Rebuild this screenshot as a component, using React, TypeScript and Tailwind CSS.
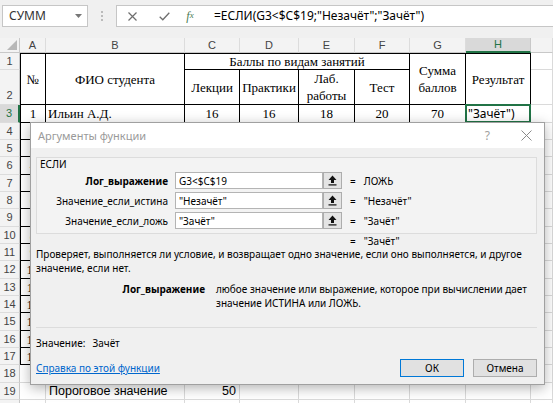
import React from 'react';

const rowHead =
	"flex items-center justify-center bg-[#f3f3f3] border-r border-b border-r-[#c8c8c8] border-b-[#dcdcdc] text-[11px] text-[#444]";
const colHead =
	"flex items-center justify-center bg-[#f3f3f3] border-r border-b border-r-[#dcdcdc] border-b-[#c8c8c8] text-[11px] text-[#444]";
const grid = "border-r border-b border-[#dadada]";
const box = "border-r border-b border-black";
const serif = "font-['Liberation_Serif','Times_New_Roman',serif] text-[13px] leading-[15px] text-black";
const center = "flex items-center justify-center text-center";

const letters = ['A', 'B', 'C', 'D', 'E', 'F', 'G'];

function UploadIcon()
{
	return (
		<svg width="9" height="11" viewBox="0 0 9 11">
			<path d="M4.5 0.5 L8.5 5 H6 V8 H3 V5 H0.5 Z" fill="#111" />
			<rect x="0.5" y="9.3" width="8" height="1.2" fill="#111" />
		</svg>
	);
}

function ArgRow({ label, value, result, bold }: { label: string; value: string; result: string; bold?: boolean })
{
	return (
		<div className="flex items-center h-[17px]">
			<div className={`w-[131px] text-right whitespace-nowrap ${bold ? 'font-bold' : ''}`}>{label}</div>
			<div className="ml-[7px] w-[148px] h-[17px] bg-white border border-[#b4b4b4] flex items-center pl-[3px] whitespace-nowrap">
				{value}
			</div>
			<div className="w-[19px] h-[17px] bg-[#e4e4e4] border border-[#adadad] flex items-center justify-center">
				<UploadIcon />
			</div>
			<span className="ml-[8px]">=</span>
			<span className="ml-[8px] whitespace-nowrap">{result}</span>
		</div>
	);
}

function Sheet()
{
	const bodyRows = Array.from({ length: 14 }, (_, i) => i + 4);

	return (
		<div className="grid grid-cols-[20px_26px_139px_55px_59px_56px_55px_56px_65px_1fr] grid-rows-[15px_17px_35px_18px_17px_17px_18px_17px_17px_18px_17px_17px_18px_17px_17px_18px_17px_17px_18px_17px_17px] bg-white font-['Liberation_Sans',Arial,sans-serif]">
			{/* column headers */}
			<div className="relative bg-[#f3f3f3] border-r border-b border-r-[#c8c8c8] border-b-[#c8c8c8]">
				<svg className="absolute left-0 top-0" width="20" height="15" viewBox="0 0 20 15">
					<path d="M7 12 L17 2 L17 12 Z" fill="#b8b8b8" />
				</svg>
			</div>
			{letters.map((l) => (
				<div key={l} className={colHead}>{l}</div>
			))}
			<div className="flex items-center justify-center bg-[#d9d9d9] border-r border-r-[#c8c8c8] border-b-2 border-b-[#217346] text-[11px] text-[#217346]">
				H
			</div>
			<div className={colHead} />

			{/* row 1 */}
			<div className={rowHead}>1</div>
			<div className={`row-span-2 ${box} border-t border-l ${serif} ${center}`}>№</div>
			<div className={`row-span-2 ${box} border-t ${serif} ${center}`}>ФИО студента</div>
			<div className={`col-span-4 ${box} border-t ${serif} ${center}`}>Баллы по видам занятий</div>
			<div className={`row-span-2 ${box} border-t ${serif} ${center} flex-col`}>
				<span>Сумма</span>
				<span className="mt-[2px]">баллов</span>
			</div>
			<div className={`row-span-2 ${box} border-t ${serif} ${center}`}>Результат</div>
			<div className={grid} />

			{/* row 2 */}
			<div className={`${rowHead} items-end pb-[1px]`}>2</div>
			<div className={`${box} ${serif} ${center}`}>Лекции</div>
			<div className={`${box} ${serif} ${center}`}>Практики</div>
			<div className={`${box} ${serif} ${center} flex-col`}>
				<span>Лаб.</span>
				<span className="mt-[2px]">работы</span>
			</div>
			<div className={`${box} ${serif} ${center}`}>Тест</div>
			<div className={grid} />

			{/* row 3 */}
			<div className="flex items-center justify-center bg-[#d9d9d9] border-b border-b-[#dcdcdc] border-r-2 border-r-[#217346] text-[11px] text-[#217346]">
				3
			</div>
			<div className={`${box} border-l ${serif} ${center}`}>1</div>
			<div className={`${box} ${serif} flex items-center pl-[2px]`}>Ильин А.Д.</div>
			<div className={`${box} ${serif} ${center}`}>16</div>
			<div className={`${box} ${serif} ${center}`}>16</div>
			<div className={`${box} ${serif} ${center}`}>18</div>
			<div className={`${box} ${serif} ${center}`}>20</div>
			<div className={`${box} ${serif} ${center}`}>70</div>
			<div className={`relative ${box} flex items-center pl-[2px] font-['Noto_Sans',sans-serif] text-[12px] whitespace-nowrap`}>
				"Зачёт")
				<div className="absolute -left-[1px] -top-[1px] -right-[1px] -bottom-[1px] border-2 border-[#217346]" />
			</div>
			<div className={grid} />

			{/* rows 4-17 */}
			{bodyRows.map((r) => (
				<React.Fragment key={r}>
					<div className={rowHead}>{r}</div>
					<div className={`${box} border-l ${serif} ${center}`}>{r - 2}</div>
					<div className={box} />
					<div className={box} />
					<div className={box} />
					<div className={box} />
					<div className={box} />
					<div className={box} />
					<div className={box} />
					<div className={grid} />
				</React.Fragment>
			))}

			{/* row 18 */}
			<div className={rowHead}>18</div>
			{Array.from({ length: 9 }, (_, i) => (
				<div key={i} className={grid} />
			))}

			{/* row 19 */}
			<div className={rowHead}>19</div>
			<div className={grid} />
			<div className={`${grid} flex items-center pl-[3px] text-[12.5px] whitespace-nowrap`}>Пороговое значение</div>
			<div className={`${grid} flex items-center justify-end pr-[3px] text-[12.5px]`}>50</div>
			{Array.from({ length: 6 }, (_, i) => (
				<div key={i} className={grid} />
			))}

			{/* row 20, only its top shows */}
			<div className={rowHead} />
			{Array.from({ length: 9 }, (_, i) => (
				<div key={i} className={grid} />
			))}
		</div>
	);
}

function FormulaBar()
{
	return (
		<div className="h-[38px] bg-[#f0f0f0] flex items-start pt-[5px] font-['Noto_Sans',sans-serif]">
			<div className="ml-[2px] w-[86px] h-[22px] bg-white border border-[#c6c6c6] flex items-center pl-[6px] text-[12px] text-[#333]">
				СУММ
				<svg className="ml-auto mr-[5px]" width="7" height="4" viewBox="0 0 7 4">
					<path d="M0 0 H7 L3.5 4 Z" fill="#777" />
				</svg>
			</div>
			<div className="w-[28px] h-[22px] flex flex-col items-center justify-center gap-[2px]">
				<span className="w-[2px] h-[2px] bg-[#bbb]" />
				<span className="w-[2px] h-[2px] bg-[#bbb]" />
				<span className="w-[2px] h-[2px] bg-[#bbb]" />
			</div>
			<div className="flex-1 h-[22px] bg-white border border-r-0 border-[#c6c6c6] flex items-center">
				<div className="w-[30px] flex justify-center">
					<svg width="9" height="9" viewBox="0 0 9 9">
						<path d="M0.5 0.5 L8.5 8.5 M8.5 0.5 L0.5 8.5" stroke="#6e6e6e" strokeWidth="1.2" />
					</svg>
				</div>
				<div className="w-[34px] flex justify-center">
					<svg width="11" height="9" viewBox="0 0 11 9">
						<path d="M0.7 4.8 L3.8 7.8 L10.3 0.8" stroke="#6e6e6e" strokeWidth="1.3" fill="none" />
					</svg>
				</div>
				<div className="w-[18px] flex justify-center font-['Liberation_Serif',serif] italic text-[12px] text-[#4b7a52]">
					f<span className="text-[9px] mt-[2px]">x</span>
				</div>
				<div className="ml-[15px] text-[12px] text-black whitespace-nowrap">=ЕСЛИ(G3&lt;$C$19;"Незачёт";"Зачёт")</div>
			</div>
		</div>
	);
}

function Dialog()
{
	return (
		<div className="absolute left-[30px] top-[122px] w-[515px] h-[263px] flex flex-col bg-[#f0f0f0] border border-[#a0a0a0] shadow-[0_3px_12px_rgba(0,0,0,0.3)] font-['Noto_Sans',sans-serif] text-[10px] leading-[14px] text-black">
			<div className="h-[25px] shrink-0 bg-white flex items-center pl-[7px]">
				<span className="text-[11px] text-[#9a9a9a]">Аргументы функции</span>
				<span className="ml-auto mr-[31px] text-[12px] text-[#a0a0a0]">?</span>
				<svg className="mr-[12px]" width="11" height="11" viewBox="0 0 11 11">
					<path d="M0.5 0.5 L10.5 10.5 M10.5 0.5 L0.5 10.5" stroke="#8a8a8a" strokeWidth="1" />
				</svg>
			</div>
			<div className="flex flex-col pl-[5px] pr-[7px] pt-[9px]">
				<div className="h-[77px] border border-[#dcdcdc] bg-[#f3f3f3] flex flex-col">
					<div className="h-[12px] leading-[12px] pl-[3px]">ЕСЛИ</div>
					<div className="mt-[2px] flex flex-col gap-[3px]">
						<ArgRow label="Лог_выражение" value="G3<$C$19" result="ЛОЖЬ" bold />
						<ArgRow label="Значение_если_истина" value={'"Незачёт"'} result={'"Незачёт"'} />
						<ArgRow label="Значение_если_ложь" value={'"Зачёт"'} result={'"Зачёт"'} />
					</div>
				</div>
				<div className="mt-[2px] h-[11px] leading-[11px] flex items-center pl-[314px]">
					<span>=</span>
					<span className="ml-[8px]">"Зачёт"</span>
				</div>
				<div className="whitespace-nowrap">
					Проверяет, выполняется ли условие, и возвращает одно значение, если оно выполняется, и другое
					<br />
					значение, если нет.
				</div>
				<div className="mt-[7px] flex">
					<div className="w-[169px] text-right font-bold">Лог_выражение</div>
					<div className="ml-[11px] whitespace-nowrap">
						любое значение или выражение, которое при вычислении дает
						<br />
						значение ИСТИНА или ЛОЖЬ.
					</div>
				</div>
				<div className="mt-[17px] border-t border-[#dcdcdc]" />
				<div className="mt-[8px] flex">
					<span>Значение:</span>
					<span className="ml-[7px]">Зачёт</span>
				</div>
				<div className="mt-[9px] h-[18px] flex items-center">
					<span className="text-[#0066cc] underline">Справка по этой функции</span>
					<div className="ml-auto w-[64px] h-[18px] bg-[#e1e1e1] border border-[#0078d7] flex items-center justify-center">
						ОК
					</div>
					<div className="ml-[9px] w-[64px] h-[18px] bg-[#e1e1e1] border border-[#adadad] flex items-center justify-center">
						Отмена
					</div>
				</div>
			</div>
		</div>
	);
}

export default function App()
{
	return (
		<div className="relative w-[553px] h-[403px] overflow-hidden bg-white">
			<FormulaBar />
			<Sheet />
			<Dialog />
		</div>
	);
}
